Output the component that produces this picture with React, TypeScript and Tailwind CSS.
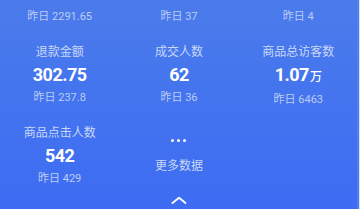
import React from "react";

const font = { fontFamily: '"Roboto", "Noto Sans CJK SC", sans-serif' };

type Cell = { label: string; value: string; unit?: string; prev: string };

const rows: Cell[][] = [
  [
    { label: "支付金额", value: "3091.43", prev: "2291.65" },
    { label: "支付人数", value: "64", prev: "37" },
    { label: "支付件数", value: "8", prev: "4" },
  ],
  [
    { label: "退款金额", value: "302.75", prev: "237.8" },
    { label: "成交人数", value: "62", prev: "36" },
    { label: "商品总访客数", value: "1.07", unit: "万", prev: "6463" },
  ],
];

function Stat({ c }: { c: Cell }) {
  return (
    <div className="flex flex-col items-center pt-[10px] h-[81px]">
      <div className="text-[12px] leading-[17px] text-[#c9d7f8]">{c.label}</div>
      <div className="mt-[3px] text-[18px] leading-[22px] font-bold tracking-[-0.5px] text-white">
        {c.value}
        {c.unit && <span className="text-[12px] font-medium ml-[1px] tracking-normal">{c.unit}</span>}
      </div>
      <div className="mt-[4px] text-[11px] leading-[15px] text-[#bccdf6]">昨日 {c.prev}</div>
    </div>
  );
}

export default function App() {
  return (
    <div className="w-[360px] h-[209px] overflow-hidden flex bg-[#d3def9]" style={font}>
      <div className="w-[357px] h-[209px] overflow-hidden bg-gradient-to-b from-[#4b7bea] to-[#3d6cf3]">
        <div className="-mt-[47px]">
          {rows.map((r, i) => (
            <div key={i} className="grid grid-cols-3 w-[358px]">
              {r.map((c, j) => (
                <Stat key={j} c={c} />
              ))}
            </div>
          ))}
          <div className="grid grid-cols-3 w-[358px]">
            <Stat c={{ label: "商品点击人数", value: "542", prev: "429" }} />
            <div className="flex flex-col items-center h-[81px] pt-[24px]">
              <div className="flex gap-[3px] h-[3px]">
                <span className="w-[3px] h-[3px] rounded-full bg-white" />
                <span className="w-[3px] h-[3px] rounded-full bg-white" />
                <span className="w-[3px] h-[3px] rounded-full bg-white" />
              </div>
              <div className="mt-[16px] text-[12px] leading-[17px] text-[#c9d7f8]">更多数据</div>
            </div>
            <div />
          </div>
          <div className="flex justify-center w-[358px]">
            <svg width="16" height="8" viewBox="0 0 16 8" fill="none">
              <path d="M1.5 7 L8 1.8 L14.5 7" stroke="white" strokeWidth="1.8" strokeLinecap="round" strokeLinejoin="round" />
            </svg>
          </div>
        </div>
      </div>
      <div className="w-[2px] h-[209px] bg-[#4f7ef0]" />
    </div>
  );
}
